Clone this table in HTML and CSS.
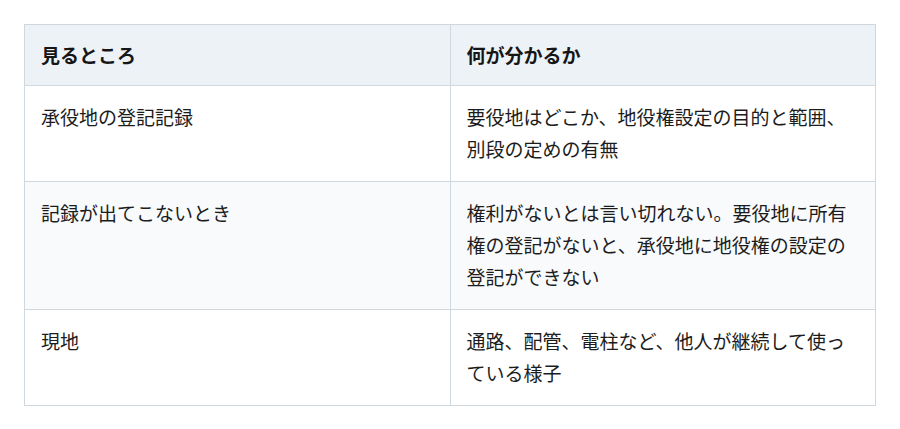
FILE: index.html
```html
<!DOCTYPE html>
<html lang="ja">
<head>
<meta charset="utf-8">
<title>地役権の確認</title>
<link rel="stylesheet" href="styles.css">
</head>
<body>
<div class="wrap">
<table class="info-table">
  <thead>
    <tr><th>見るところ</th><th>何が分かるか</th></tr>
  </thead>
  <tbody>
    <tr><td>承役地の登記記録</td><td>要役地はどこか、地役権設定の目的と範囲、別段の定めの有無</td></tr>
    <tr class="alt"><td>記録が出てこないとき</td><td>権利がないとは言い切れない。要役地に所有権の登記がないと、承役地に地役権の設定の登記ができない</td></tr>
    <tr><td>現地</td><td>通路、配管、電柱など、他人が継続して使っている様子</td></tr>
  </tbody>
</table>
</div>
</body>
</html>
```
FILE: styles.css
```css
html, body {
  margin: 0;
  padding: 0;
  background: #ffffff;
}
.wrap {
  padding: 24px;
}
.info-table {
  width: 100%;
  border-collapse: collapse;
  table-layout: fixed;
  font-family: "Noto Sans CJK JP", "Noto Sans", sans-serif;
  font-size: 19px;
  line-height: 32px;
  color: #1c1c1c;
}
.info-table th,
.info-table td {
  border: 1px solid #cfd7df;
  padding: 15px 16px;
  text-align: left;
  vertical-align: top;
  width: 50%;
}
.info-table td:last-child {
  padding-bottom: 16px;
}
.info-table th {
  padding: 14px 16px;
  background: #edf2f7;
  font-weight: 700;
  color: #161616;
}
.info-table tr.alt td {
  background: #f8fafc;
}
```
